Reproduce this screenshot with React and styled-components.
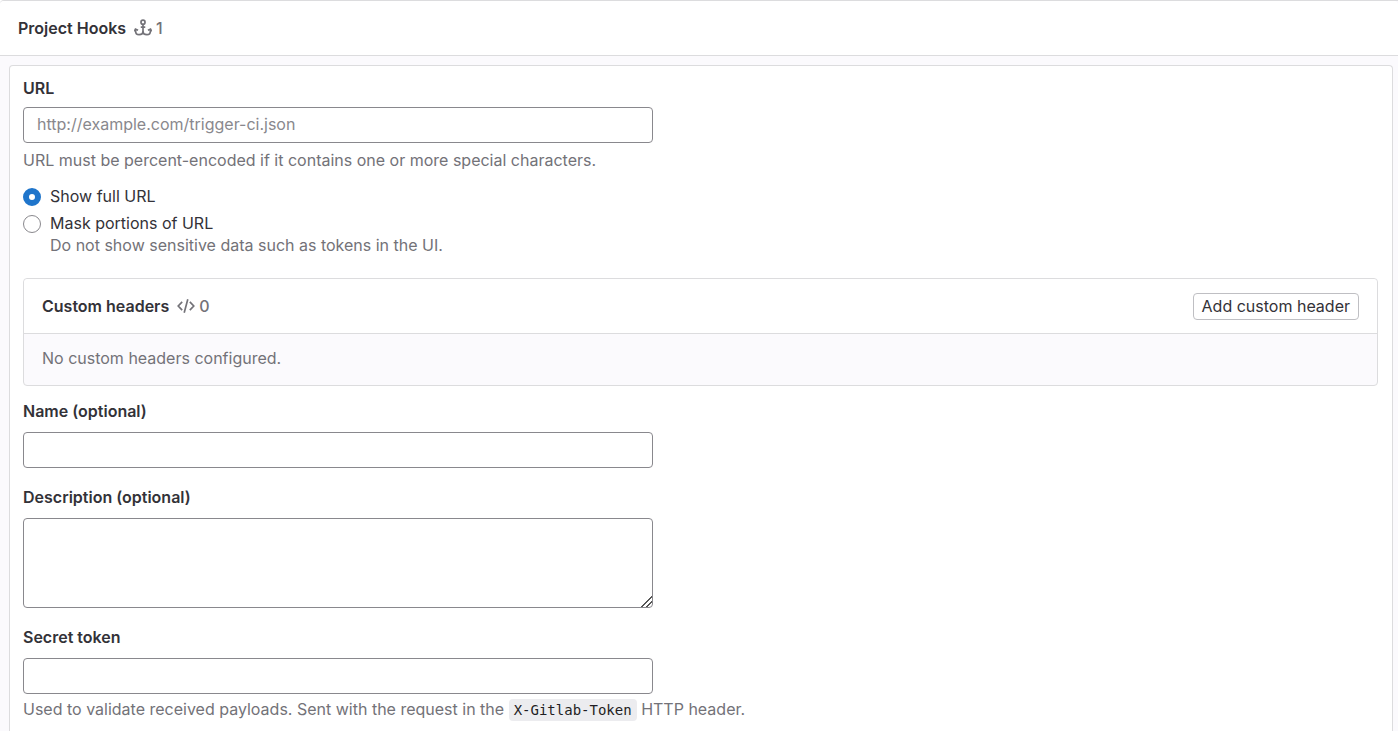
import { useState } from "react";
import styled, { createGlobalStyle } from "styled-components";

const GlobalStyle = createGlobalStyle`
  :root {
    --color-text: #333238;
    --color-subtle: #737278;
    --color-placeholder: #89888d;
    --color-border: #dcdcde;
    --color-control: #89888d;
    --color-surface: #fbfafd;
    --color-blue: #1f75cb;
  }

  *,
  *::before,
  *::after {
    box-sizing: border-box;
  }

  body {
    margin: 0;
    background: #fff;
    color: var(--color-text);
    font-family: Inter, "Noto Sans", sans-serif;
    font-size: 16px;
    line-height: 22px;
    overflow: hidden;
  }

  button,
  input,
  textarea {
    font: inherit;
    color: inherit;
  }
`;

const Card = styled.section`
  display: flex;
  flex-direction: column;
  min-height: 100vh;
  border-top: 1px solid var(--color-border);
  border-top-left-radius: 4px;
  background: var(--color-surface);
`;

const CardHeader = styled.header`
  display: flex;
  align-items: center;
  justify-content: space-between;
  min-height: 55px;
  padding: 0 18px;
  border-bottom: 1px solid var(--color-border);
  background: #fff;
  border-radius: 4px 4px 0 0;
`;

const TitleGroup = styled.div`
  display: flex;
  align-items: center;
  gap: 8px;
`;

const Title = styled.h2`
  margin: 0;
  font-size: 16px;
  font-weight: 600;
`;

const Count = styled.span`
  display: flex;
  align-items: center;
  gap: 4px;
  color: var(--color-subtle);
  font-weight: 500;
`;

const FormPanel = styled.form`
  display: flex;
  flex: 1;
  flex-direction: column;
  margin: 9px 5px 0 9px;
  padding: 11px 14px 18px 13px;
  border: 1px solid var(--color-border);
  border-bottom: 0;
  border-radius: 4px 4px 0 0;
  background: #fff;
`;

const Field = styled.div`
  display: flex;
  flex-direction: column;
  margin-bottom: 18px;
`;

const Label = styled.label`
  align-self: flex-start;
  margin-bottom: ${({ $tight }) => ($tight ? "8px" : "10px")};
  font-weight: 600;
`;

const TextInput = styled.input`
  width: 100%;
  max-width: 630px;
  height: 36px;
  padding: 0 13px 2px;
  border: 1px solid var(--color-control);
  border-radius: 4px;
  background: #fff;

  &::placeholder {
    color: var(--color-placeholder);
    opacity: 1;
  }
`;

const TextArea = styled.textarea`
  width: 100%;
  max-width: 630px;
  height: 90px;
  padding: 6px 13px;
  border: 1px solid var(--color-control);
  border-radius: 4px;
  background: #fff;
  resize: vertical;

  &::-webkit-resizer {
    background: linear-gradient(
      135deg,
      transparent 61%,
      #555 63%,
      #555 67%,
      transparent 69%,
      transparent 78%,
      #555 80%,
      #555 84%,
      transparent 86%
    );
  }
`;

const HelpText = styled.p`
  margin: ${({ $spaced }) => ($spaced ? "6px" : "4px")} 0 0;
  color: var(--color-subtle);
`;

const RadioGroup = styled.div`
  display: flex;
  flex-direction: column;
  gap: 5px;
  margin: -4px 0 22px;
`;

const RadioOption = styled.div`
  display: grid;
  grid-template-columns: 18px 1fr;
  column-gap: 9px;
  align-items: start;
`;

const Radio = styled.input`
  appearance: none;
  width: 18px;
  height: 18px;
  margin: 3px 0 0;
  border: 1px solid var(--color-control);
  border-radius: 50%;
  background: #fff;

  &:checked {
    border: 6px solid var(--color-blue);
  }
`;

const RadioHelp = styled.span`
  grid-column: 2;
  color: var(--color-subtle);
`;

const HeadersCard = styled.section`
  margin-bottom: 14px;
  border: 1px solid var(--color-border);
  border-radius: 4px;
  background: var(--color-surface);
`;

const HeadersBody = styled.div`
  padding: 13px 18px 16px;
  color: var(--color-subtle);
`;

const Button = styled.button`
  padding: 2px 8px;
  border: 1px solid #bfbfc3;
  border-radius: 4px;
  background: #fff;
  line-height: 21px;
  cursor: pointer;
`;

const Code = styled.code`
  padding: 3px 5px;
  border-radius: 4px;
  background: #ececef;
  color: #1f1e24;
  font-family: "DejaVu Sans Mono", monospace;
  font-size: 14px;
`;

function AnchorIcon() {
  return (
    <svg
      width="18"
      height="18"
      viewBox="0 0 16 16"
      fill="none"
      stroke="currentColor"
      strokeWidth="1.5"
      aria-hidden="true"
    >
      <circle cx="8" cy="2.8" r="1.8" />
      <path d="M8 4.600v9M6 7.200h4" />
      <path d="M1.400 9.200v1.400c0 2.100 1.300 3.300 3.100 3.300 1.900 0 3.500-1.100 3.500-3 0 1.900 1.600 3 3.500 3 1.800 0 3.100-1.200 3.100-3.300V9.200" />
      <path d="M.500 11 1.300 9l2.300 1.100M15.500 11l-.8-2-2.300 1.100" />
    </svg>
  );
}

function CodeIcon() {
  return (
    <svg
      width="18"
      height="18"
      viewBox="0 0 16 16"
      fill="none"
      stroke="currentColor"
      strokeWidth="1.5"
      aria-hidden="true"
    >
      <path d="M4.600 4.400 1.100 8l3.500 3.600M11.400 4.400 14.900 8l-3.500 3.600M9.600 2 6.400 14" />
    </svg>
  );
}

function App() {
  const [urlMode, setUrlMode] = useState("full");

  return (
    <>
      <GlobalStyle />
      <Card>
        <CardHeader>
          <TitleGroup>
            <Title>Project Hooks</Title>
            <Count>
              <AnchorIcon />1
            </Count>
          </TitleGroup>
        </CardHeader>

        <FormPanel onSubmit={(e) => e.preventDefault()}>
          <Field>
            <Label htmlFor="hook-url" $tight>
              URL
            </Label>
            <TextInput
              id="hook-url"
              type="text"
              placeholder="http://example.com/trigger-ci.json"
            />
            <HelpText $spaced>
              URL must be percent-encoded if it contains one or more special
              characters.
            </HelpText>
          </Field>

          <RadioGroup role="radiogroup" aria-label="URL">
            <RadioOption>
              <Radio
                type="radio"
                id="url-full"
                name="url-mode"
                checked={urlMode === "full"}
                onChange={() => setUrlMode("full")}
              />
              <label htmlFor="url-full">Show full URL</label>
            </RadioOption>
            <RadioOption>
              <Radio
                type="radio"
                id="url-mask"
                name="url-mode"
                checked={urlMode === "mask"}
                onChange={() => setUrlMode("mask")}
              />
              <label htmlFor="url-mask">Mask portions of URL</label>
              <RadioHelp>
                Do not show sensitive data such as tokens in the UI.
              </RadioHelp>
            </RadioOption>
          </RadioGroup>

          <HeadersCard>
            <CardHeader>
              <TitleGroup>
                <Title>Custom headers</Title>
                <Count>
                  <CodeIcon />0
                </Count>
              </TitleGroup>
              <Button type="button">Add custom header</Button>
            </CardHeader>
            <HeadersBody>No custom headers configured.</HeadersBody>
          </HeadersCard>

          <Field>
            <Label htmlFor="hook-name">Name (optional)</Label>
            <TextInput id="hook-name" type="text" />
          </Field>

          <Field>
            <Label htmlFor="hook-description">Description (optional)</Label>
            <TextArea id="hook-description" />
          </Field>

          <Field>
            <Label htmlFor="hook-token">Secret token</Label>
            <TextInput id="hook-token" type="password" autoComplete="off" />
            <HelpText>
              Used to validate received payloads. Sent with the request in the{" "}
              <Code>X-Gitlab-Token</Code> HTTP header.
            </HelpText>
          </Field>
        </FormPanel>
      </Card>
    </>
  );
}

export default App;
